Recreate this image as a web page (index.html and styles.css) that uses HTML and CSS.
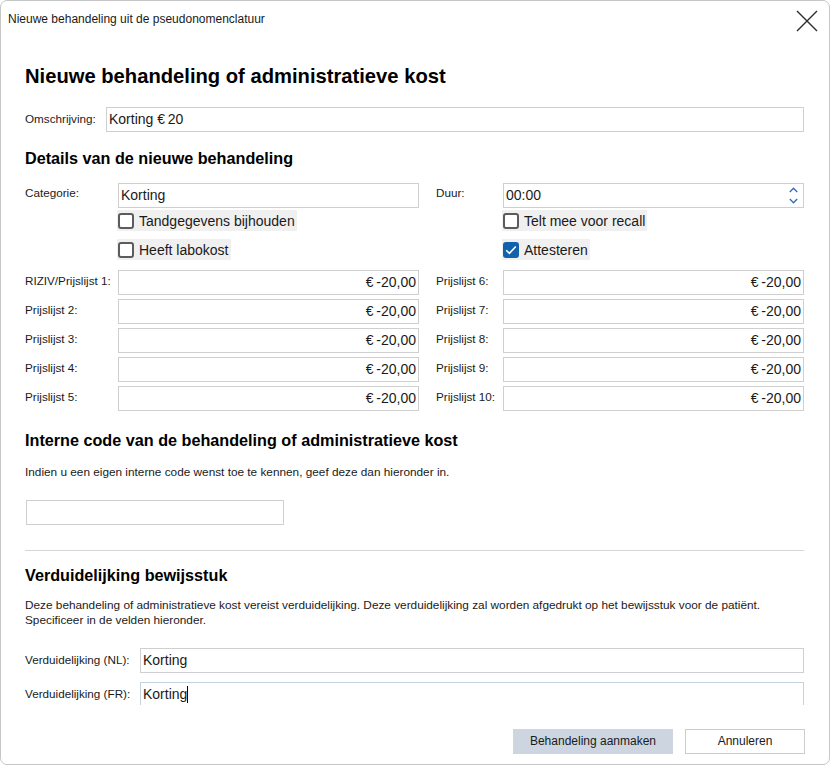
FILE: index.html
```html
<!DOCTYPE html>
<html lang="nl">
<head>
<meta charset="utf-8">
<title>Nieuwe behandeling uit de pseudonomenclatuur</title>
<link rel="stylesheet" href="styles.css">
</head>
<body>
<div class="window">
  <div class="titlebar">
    <span class="title">Nieuwe behandeling uit de pseudonomenclatuur</span>
    <span class="close" aria-label="Sluiten">
      <svg width="22" height="22" viewBox="0 0 22 22"><path d="M1 1 L21 21 M21 1 L1 21" stroke="#2b2b2b" stroke-width="1.4" fill="none"/></svg>
    </span>
  </div>
  <div class="content">
    <h1 class="h1">Nieuwe behandeling of administratieve kost</h1>
    <div class="row omschr">
      <span class="lbl lbl-omschr">Omschrijving:</span>
      <div class="field grow">Korting €&#8201;20</div>
    </div>

    <h2 class="h2 h2-details">Details van de nieuwe behandeling</h2>
    <div class="grid">
      <span class="lbl lg">Categorie:</span>
      <div class="field">Korting</div>
      <span class="lbl lg lbl-right">Duur:</span>
      <div class="field spin">
        <span>00:00</span>
        <span class="arrows">
          <svg width="9" height="6" viewBox="0 0 9 6"><path d="M0.8 5 L4.5 1.2 L8.2 5" stroke="#2f6db3" stroke-width="1.3" fill="none"/></svg>
          <svg width="9" height="6" viewBox="0 0 9 6"><path d="M0.8 1 L4.5 4.8 L8.2 1" stroke="#2f6db3" stroke-width="1.3" fill="none"/></svg>
        </span>
      </div>

      <span></span>
      <label class="check"><span class="box"></span><span>Tandgegevens bijhouden</span></label>
      <span></span>
      <label class="check"><span class="box"></span><span>Telt mee voor recall</span></label>

      <span></span>
      <label class="check"><span class="box"></span><span>Heeft labokost</span></label>
      <span></span>
      <label class="check"><span class="box checked"><svg width="12" height="10" viewBox="0 0 12 10"><path d="M1.2 5.2 L4.4 8.3 L10.8 1.5" stroke="#fff" stroke-width="1.6" fill="none"/></svg></span><span>Attesteren</span></label>

      <span class="lbl lp">RIZIV/Prijslijst 1:</span>
      <div class="field price">€&#8201;-20,00</div>
      <span class="lbl lbl-right lp">Prijslijst 6:</span>
      <div class="field price">€&#8201;-20,00</div>

      <span class="lbl lp">Prijslijst 2:</span>
      <div class="field price">€&#8201;-20,00</div>
      <span class="lbl lbl-right lp">Prijslijst 7:</span>
      <div class="field price">€&#8201;-20,00</div>

      <span class="lbl lp">Prijslijst 3:</span>
      <div class="field price">€&#8201;-20,00</div>
      <span class="lbl lbl-right lp">Prijslijst 8:</span>
      <div class="field price">€&#8201;-20,00</div>

      <span class="lbl lp">Prijslijst 4:</span>
      <div class="field price">€&#8201;-20,00</div>
      <span class="lbl lbl-right lp">Prijslijst 9:</span>
      <div class="field price">€&#8201;-20,00</div>

      <span class="lbl lp">Prijslijst 5:</span>
      <div class="field price">€&#8201;-20,00</div>
      <span class="lbl lbl-right lp">Prijslijst 10:</span>
      <div class="field price">€&#8201;-20,00</div>
    </div>

    <h2 class="h2 h2-code">Interne code van de behandeling of administratieve kost</h2>
    <p class="text text-code">Indien u een eigen interne code wenst toe te kennen, geef deze dan hieronder in.</p>
    <div class="field code"></div>

    <hr class="sep">

    <h2 class="h2 h2-verd">Verduidelijking bewijsstuk</h2>
    <p class="text text-verd">Deze behandeling of administratieve kost vereist verduidelijking. Deze verduidelijking zal worden afgedrukt op het bewijsstuk voor de patiënt.<br>Specificeer in de velden hieronder.</p>
    <div class="row verd-nl">
      <span class="lbl lbl-verd">Verduidelijking (NL):</span>
      <div class="field grow">Korting</div>
    </div>
    <div class="row verd-fr">
      <span class="lbl lbl-verd">Verduidelijking (FR):</span>
      <div class="field grow focus">Korting<span class="caret"></span></div>
    </div>
  </div>
  <div class="footer">
    <span class="btn btn-primary">Behandeling aanmaken</span>
    <span class="btn btn-cancel">Annuleren</span>
  </div>
</div>
</body>
</html>
```
FILE: styles.css
```css
html, body {
  margin: 0;
  padding: 0;
  background: #ffffff;
}

body {
  font-family: "Liberation Sans", Arial, sans-serif;
  color: #1a1a1a;
}

.window {
  box-sizing: border-box;
  width: 830px;
  height: 765px;
  border: 1px solid #c6c6c6;
  border-radius: 7px;
  background: #ffffff;
  display: flex;
  flex-direction: column;
  overflow: hidden;
}

.titlebar {
  height: 39px;
  flex: none;
  display: flex;
  align-items: flex-start;
  justify-content: space-between;
  padding: 0 11px 0 7px;
}

.title {
  font-size: 12px;
  line-height: 15px;
  margin-top: 11px;
  color: #1a1a1a;
}

.close {
  margin-top: 9px;
  width: 22px;
  height: 22px;
  display: block;
}
.close svg { display: block; }

.content {
  height: 665px;
  flex: none;
  overflow: hidden;
  padding: 0 25px 0 24px;
}

.h1 {
  margin: 24px 0 0;
  font-size: 20.2px;
  line-height: 24px;
  font-weight: bold;
  color: #000;
}

.h2 {
  margin: 0;
  font-size: 16.2px;
  line-height: 20px;
  font-weight: bold;
  color: #000;
}

.row {
  display: flex;
  align-items: flex-start;
}

.omschr { margin-top: 19px; }

.lbl {
  font-size: 11.7px;
  line-height: 16px;
  padding-top: 4px;
  color: #1a1a1a;
  white-space: nowrap;
}
.lbl-omschr { width: 81px; flex: none; }
.lbl-verd { width: 115px; flex: none; }
.lbl-right { padding-left: 17px; }
.lg { padding-top: 2px; }
.lp { padding-top: 3px; }

.field {
  box-sizing: border-box;
  height: 25px;
  border: 1px solid #cfcfcf;
  background: #fff;
  font-size: 14px;
  line-height: 23px;
  padding: 0 2px 0 2px;
  color: #1a1a1a;
  white-space: nowrap;
}
.grow { flex: 1; }

.h2-details { margin-top: 16px; }

.grid {
  margin-top: 15px;
  display: grid;
  grid-template-columns: 93px 301px 84px 301px;
  grid-template-rows: 27px 29px 31px repeat(4, 29px) 25px;
  align-items: start;
}

.spin {
  display: flex;
  justify-content: space-between;
  align-items: center;
  padding-right: 5px;
}
.arrows {
  display: flex;
  flex-direction: column;
  gap: 5px;
}
.arrows svg { display: block; }

.check {
  justify-self: start;
  margin-left: -1px;
  height: 21px;
  display: inline-flex;
  align-items: center;
  gap: 5px;
  padding: 0 2px 0 1px;
  background: #f0f0f0;
  font-size: 14px;
  color: #1a1a1a;
  white-space: nowrap;
}
.box {
  box-sizing: border-box;
  width: 16px;
  height: 16px;
  border: 2px solid #5c5c5c;
  border-radius: 3px;
  background: #fff;
  display: flex;
  align-items: center;
  justify-content: center;
}
.box.checked {
  background: #1161ad;
  border-color: #1161ad;
}
.box svg { display: block; }

.price { text-align: right; }

.h2-code { margin-top: 19px; }

.text {
  margin: 0;
  font-size: 11.8px;
  line-height: 15px;
  color: #1a1a1a;
}
.text-code { margin-top: 15px; }

.code {
  margin-top: 20px;
  margin-left: 1px;
  width: 258px;
}

.sep {
  margin: 25px 0 0;
  border: 0;
  border-top: 1px solid #d6d6d6;
  height: 0;
}

.h2-verd { margin-top: 14px; }
.text-verd { margin-top: 13px; }

.verd-nl { margin-top: 20px; }
.verd-fr { margin-top: 9px; }

.focus { border-color: #c5d2df; }
.caret {
  display: inline-block;
  width: 1px;
  height: 17px;
  background: #000;
  vertical-align: -4px;
}

.footer {
  flex: 1;
  display: flex;
  justify-content: flex-end;
  align-items: flex-start;
  gap: 12px;
  padding: 24px 24px 0 0;
}

.btn {
  box-sizing: border-box;
  height: 25px;
  font-size: 12px;
  line-height: 23px;
  text-align: center;
  color: #1a1a1a;
  border: 1px solid #cccccc;
}
.btn-primary {
  width: 160px;
  background: #ccd5e0;
  border-color: #ccd5e0;
}
.btn-cancel {
  width: 120px;
  background: #fff;
}
```
